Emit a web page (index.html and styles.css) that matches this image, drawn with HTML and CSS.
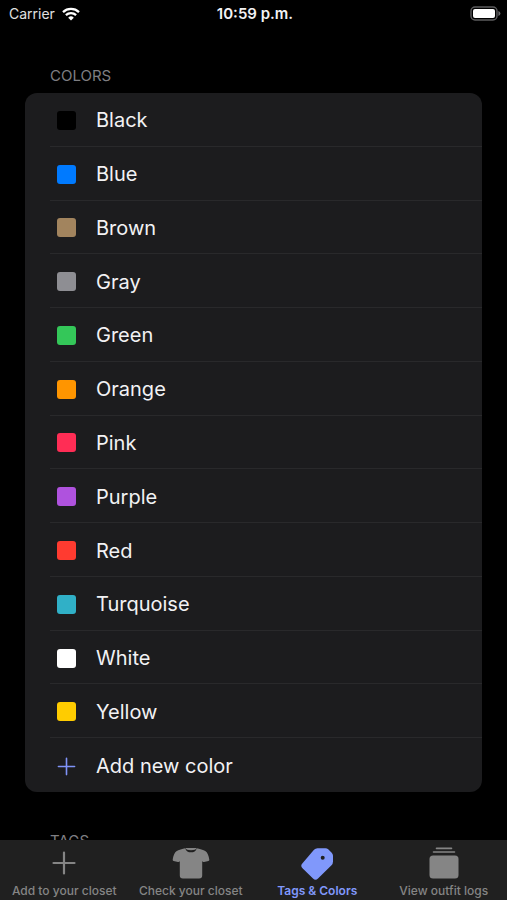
FILE: index.html
```html
<!DOCTYPE html>
<html lang="en">
<head>
<meta charset="utf-8">
<meta name="viewport" content="width=device-width, initial-scale=1">
<title>Tags &amp; Colors</title>
<link rel="stylesheet" href="styles.css">
</head>
<body>
<header class="status">
  <div class="carrier">
    <span>Carrier</span>
    <svg class="wifi" viewBox="0 0 18 14" aria-hidden="true">
      <path d="M1 5.1a11.7 11.7 0 0 1 16 0M3.9 8.2a7.4 7.4 0 0 1 10.2 0" fill="none" stroke="currentColor" stroke-width="2.3"/>
      <path d="M9 13.6 6.2 10.7a4 4 0 0 1 5.6 0z" fill="currentColor"/>
    </svg>
  </div>
  <time class="clock">10:59 p.m.</time>
  <svg class="battery" viewBox="0 0 31 15" aria-hidden="true">
    <rect x="1" y="1" width="26" height="13" rx="4" fill="none" stroke="#5c5c5e" stroke-width="1.4"/>
    <rect x="3" y="3" width="22" height="9" rx="2" fill="#fff"/>
    <path d="M28.4 5v5q2-.7 2-2.5t-2-2.5z" fill="#6c6c6e"/>
  </svg>
</header>

<main class="content">
  <h2 class="section-title">COLORS</h2>
  <ul class="card">
    <li class="row"><span class="swatch black"></span><span class="name">Black</span></li>
    <li class="row"><span class="swatch blue"></span><span class="name">Blue</span></li>
    <li class="row"><span class="swatch brown"></span><span class="name">Brown</span></li>
    <li class="row"><span class="swatch gray"></span><span class="name">Gray</span></li>
    <li class="row"><span class="swatch green"></span><span class="name">Green</span></li>
    <li class="row"><span class="swatch orange"></span><span class="name">Orange</span></li>
    <li class="row"><span class="swatch pink"></span><span class="name">Pink</span></li>
    <li class="row"><span class="swatch purple"></span><span class="name">Purple</span></li>
    <li class="row"><span class="swatch red"></span><span class="name">Red</span></li>
    <li class="row"><span class="swatch turquoise"></span><span class="name">Turquoise</span></li>
    <li class="row"><span class="swatch white"></span><span class="name">White</span></li>
    <li class="row"><span class="swatch yellow"></span><span class="name">Yellow</span></li>
    <li class="row">
      <button class="add" type="button">
        <svg class="plus" viewBox="0 0 20 20" aria-hidden="true"><path d="M10 1.500v17M1.500 10h17" stroke="currentColor" stroke-width="1.700" stroke-linecap="round"/></svg>
        <span class="name">Add new color</span>
      </button>
    </li>
  </ul>
  <h2 class="section-title">TAGS</h2>
</main>

<nav class="tabs">
  <a class="tab" href="#add">
    <svg class="icon" viewBox="0 0 40 36" aria-hidden="true"><path d="M20 7.500v21M9.500 18h21" stroke="currentColor" stroke-width="2.200" stroke-linecap="round"/></svg>
    <span>Add to your closet</span>
  </a>
  <a class="tab" href="#closet">
    <svg class="icon" viewBox="0 0 40 36" aria-hidden="true"><path d="M14.300 3.200C15 6.300 17.300 7.300 20 7.300S25 6.300 25.700 3.200C28.500 4 32.500 4.800 34.600 6.200C36.500 7.500 37.700 10.500 38.300 14.500Q38.500 15.600 37.400 15.900L33 17Q31.700 17.300 31.200 16V30.500Q31.200 33.500 28.200 33.500H11.800Q8.800 33.500 8.800 30.500V16Q8.300 17.300 7 17L2.600 15.900Q1.500 15.600 1.700 14.500C2.300 10.500 3.500 7.500 5.400 6.200C7.500 4.800 11.500 4 14.300 3.200Z" fill="currentColor"/><path d="M14.500 3.100H25.500Q25 5.300 20 5.300T14.500 3.100Z" fill="currentColor"/></svg>
    <span>Check your closet</span>
  </a>
  <a class="tab active" href="#tags" aria-current="page">
    <svg class="icon" viewBox="0 0 40 36" aria-hidden="true"><path fill-rule="evenodd" d="M20.500 3.200H28.500Q30 3.200 31.200 4.300L34.700 7.700Q36 9 36 10.800V16.500Q36 18.700 34.500 20.200L21 33.500Q18.500 36 16 33.500L5.500 23.200Q3 20.700 5.500 18.200L17 4.800Q18.500 3.200 20.500 3.200ZM25.700 10.800a2 2 0 1 0 0 4a2 2 0 1 0 0-4Z" fill="currentColor"/></svg>
    <span>Tags &amp; Colors</span>
  </a>
  <a class="tab" href="#logs">
    <svg class="icon" viewBox="0 0 40 36" aria-hidden="true"><path d="M12.500 3.400h15M9.500 7h21" stroke="currentColor" stroke-width="1.600" stroke-linecap="round"/><rect x="5.500" y="10.500" width="29" height="23" rx="3.500" fill="currentColor"/></svg>
    <span>View outfit logs</span>
  </a>
</nav>
</body>
</html>
```
FILE: styles.css
```css
* {
  box-sizing: border-box;
}

html {
  background: #000;
}

body {
  margin: 0;
  height: 100vh;
  display: flex;
  flex-direction: column;
  background: #000;
  color: #f2f2f4;
  font-family: Inter, "Liberation Sans", sans-serif;
}

.status {
  flex: none;
  display: grid;
  grid-template-columns: 1fr auto 1fr;
  align-items: center;
  height: 27px;
  padding: 0 6px 0 9px;
  font-size: 14px;
}

.carrier {
  display: flex;
  align-items: center;
  gap: 7px;
  color: #e0e0e0;
}

.wifi {
  width: 18px;
  height: 14px;
  color: #fff;
}

.clock {
  font-size: 15px;
  font-weight: 600;
}

.battery {
  justify-self: end;
  width: 31px;
  height: 15px;
}

.content {
  flex: 1;
  min-height: 0;
  overflow: hidden;
  padding: 39px 25px 0;
}

.section-title {
  margin: 0 0 7px;
  padding-left: 25px;
  color: #7e7e82;
  font-size: 15px;
  font-weight: 400;
  line-height: 20px;
}

.card {
  display: grid;
  grid-auto-rows: 1fr;
  min-height: 699px;
  margin: 0 0 39px;
  padding: 0;
  border-radius: 12px;
  background: #1c1c1e;
  list-style: none;
  overflow: hidden;
}

.row {
  display: flex;
  align-items: center;
  margin-left: 25px;
  padding: 2px 0 0 7px;
  border-bottom: 1px solid #29292b;
}

.row:last-child {
  border-bottom: 0;
}

.swatch {
  width: 19px;
  height: 19px;
  border-radius: 3px;
}

.name {
  margin-left: 20px;
  font-size: 20px;
  line-height: 26px;
}

.black { background: #000; }
.blue { background: #007aff; }
.brown { background: #a2845e; }
.gray { background: #8e8e93; }
.green { background: #34c759; }
.orange { background: #ff9500; }
.pink { background: #ff2d55; }
.purple { background: #af52de; }
.red { background: #ff3b30; }
.turquoise { background: #30b0c7; }
.white { background: #fff; }
.yellow { background: #ffcc00; }

.add {
  display: flex;
  align-items: center;
  padding: 0;
  border: 0;
  background: none;
  color: inherit;
  font: inherit;
}

.plus {
  width: 19px;
  height: 19px;
  color: #7f93f8;
}

.tabs {
  flex: none;
  display: grid;
  grid-template-columns: repeat(4, 1fr);
  height: 60px;
  padding: 5px 0 0 1px;
  background: #202020;
}

.tab {
  display: flex;
  flex-direction: column;
  align-items: center;
  gap: 2px;
  color: #858585;
  font-size: 12px;
  font-weight: 500;
  line-height: 16px;
  text-decoration: none;
  white-space: nowrap;
}

.tab.active {
  color: #8098fb;
  font-weight: 600;
}

.icon {
  width: 40px;
  height: 36px;
}
```
